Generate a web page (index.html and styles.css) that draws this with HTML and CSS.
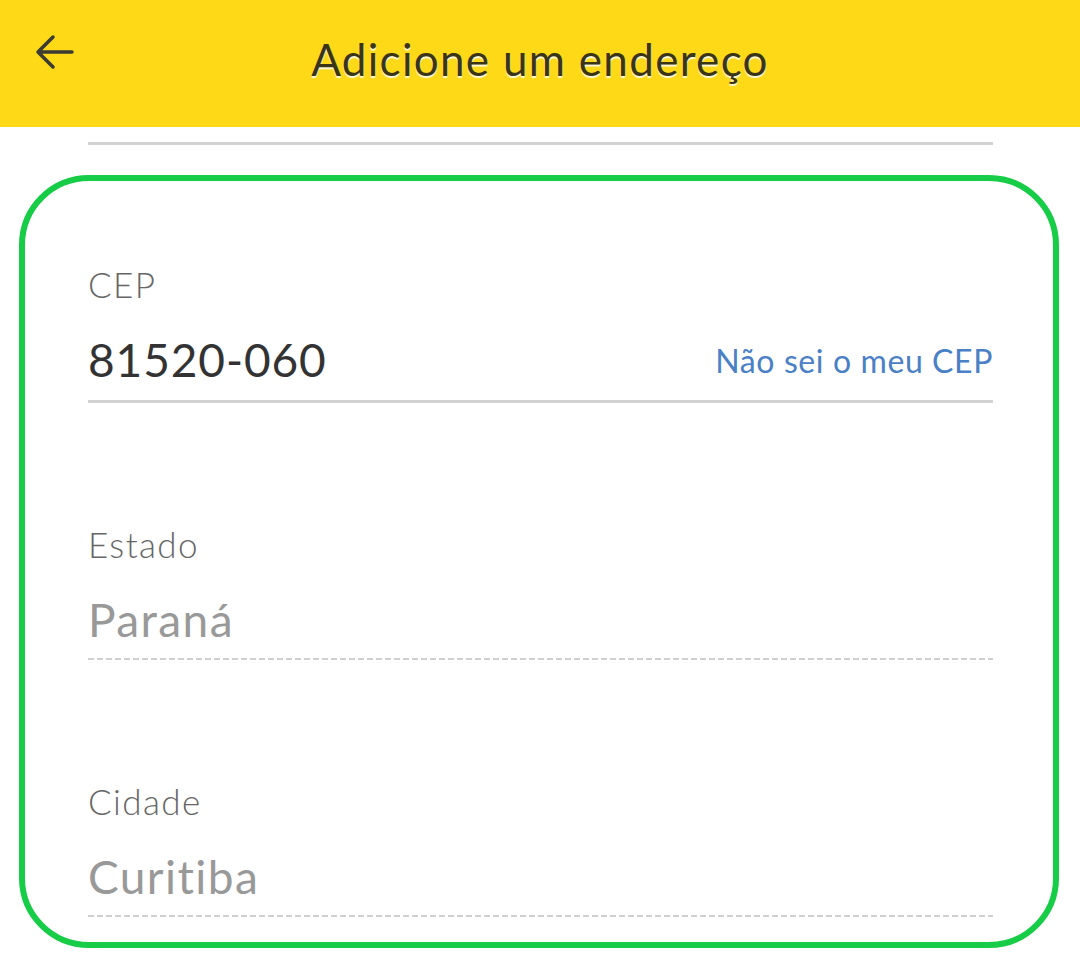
FILE: index.html
```html
<!DOCTYPE html>
<html lang="pt-BR">
<head>
<meta charset="utf-8">
<link rel="stylesheet" href="styles.css">
</head>
<body>
<header class="topbar">
  <button class="back" aria-label="Voltar">
    <svg width="40" height="36" viewBox="0 0 40 36"><path d="M37 18H3M18 3L3 18l15 15" fill="none" stroke="#3b3a33" stroke-width="3.5" stroke-linecap="round" stroke-linejoin="round"/></svg>
  </button>
  <h1 class="title">Adicione um endereço</h1>
</header>
<main class="content">
  <div class="prev-field"></div>
  <section class="card">
    <div class="field">
      <div class="label">CEP</div>
      <div class="row solid">
        <span class="value">81520-060</span>
        <a class="link" href="#">Não sei o meu CEP</a>
      </div>
    </div>
    <div class="field">
      <div class="label">Estado</div>
      <div class="row dashed">
        <span class="value muted">Paraná</span>
      </div>
    </div>
    <div class="field">
      <div class="label">Cidade</div>
      <div class="row dashed">
        <span class="value muted">Curitiba</span>
      </div>
    </div>
  </section>
</main>
</body>
</html>
```
FILE: styles.css
```css
html, body {
  margin: 0;
  padding: 0;
  background: #ffffff;
  font-family: Lato, "Open Sans", sans-serif;
}
.topbar {
  position: fixed;
  top: 0;
  left: 0;
  right: 0;
  height: 127px;
  background: #fdd917;
  display: flex;
  align-items: center;
  justify-content: center;
  z-index: 2;
}
.back {
  position: absolute;
  left: 35px;
  top: 34px;
  background: none;
  border: 0;
  padding: 0;
  display: flex;
}
.title {
  margin: 0;
  margin-top: -10px;
  font-weight: 400;
  font-size: 44px;
  letter-spacing: 1.3px;
  color: #3a3517;
  text-shadow: 0 2px 1px rgba(255, 255, 255, 0.85);
}
.content {
  padding-top: 0;
}
.prev-field {
  height: 142px;
  margin: 0 87px 0 88px;
  border-bottom: 3px solid #d2d2d2;
}
.card {
  margin: 30px 21px 0 19px;
  border: 6px solid #17cc46;
  border-radius: 70px;
  padding: 81px 60px 25px 63px;
  display: flex;
  flex-direction: column;
  gap: 119px;
}
.field {
  display: flex;
  flex-direction: column;
}
.label {
  font-size: 35px;
  line-height: 44px;
  font-weight: 300;
  letter-spacing: 1.4px;
  color: #666666;
}
.row {
  display: flex;
  align-items: baseline;
  justify-content: space-between;
  margin-top: 26px;
  padding-bottom: 12px;
}
.row.solid {
  border-bottom: 3px solid #d2d2d2;
}
.row.dashed {
  background: repeating-linear-gradient(to right, #cfcfcf 0 6px, transparent 6px 9px) left bottom / 100% 2px no-repeat;
  padding-bottom: 12px;
}
.value {
  font-size: 46px;
  line-height: 56px;
  letter-spacing: 0.9px;
  color: #333333;
}
.value.muted {
  color: #999999;
  letter-spacing: 1.4px;
}
.link {
  align-self: center;
  font-size: 32px;
  letter-spacing: 0.6px;
  color: #4a80c6;
  text-decoration: none;
}
```
